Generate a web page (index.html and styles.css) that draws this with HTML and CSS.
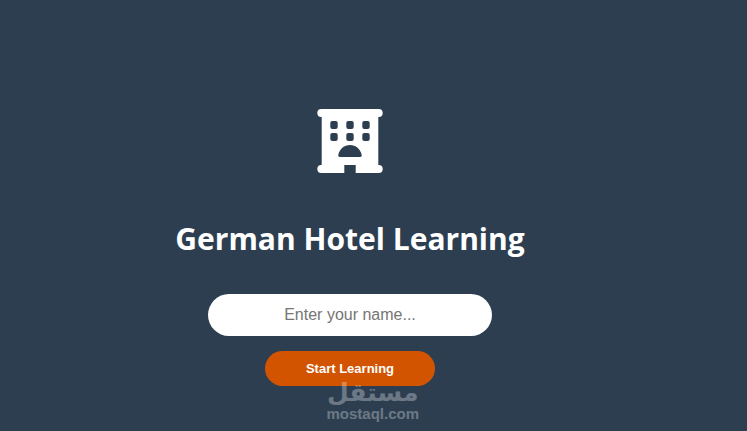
FILE: index.html
```
<!DOCTYPE html>
<html lang="en">
<head>
  <meta charset="UTF-8">
  <meta name="viewport" content="width=device-width, initial-scale=1.0">
  <title>German Hotel Learning</title>
  <link rel="stylesheet" href="styles.css">
</head>
<body>
  <main class="welcome">
    <svg class="hotel-icon" viewBox="0 0 66 64" aria-hidden="true">
      <path fill="#fff" fill-rule="evenodd" d="M4.3 0H61.7a4 4 0 0 1 0 8h-.4V56h.4a4 4 0 0 1 0 8H38.7V56H27.3v8H4.3a4 4 0 0 1 0-8h.4V8h-.4a4 4 0 0 1 0-8z
        M15.3 12h3.4a2 2 0 0 1 2 2v4a2 2 0 0 1-2 2h-3.4a2 2 0 0 1-2-2v-4a2 2 0 0 1 2-2z
        M31.3 12h3.4a2 2 0 0 1 2 2v4a2 2 0 0 1-2 2h-3.4a2 2 0 0 1-2-2v-4a2 2 0 0 1 2-2z
        M47.3 12h3.4a2 2 0 0 1 2 2v4a2 2 0 0 1-2 2h-3.4a2 2 0 0 1-2-2v-4a2 2 0 0 1 2-2z
        M15.3 24h3.4a2 2 0 0 1 2 2v4a2 2 0 0 1-2 2h-3.4a2 2 0 0 1-2-2v-4a2 2 0 0 1 2-2z
        M31.3 24h3.4a2 2 0 0 1 2 2v4a2 2 0 0 1-2 2h-3.4a2 2 0 0 1-2-2v-4a2 2 0 0 1 2-2z
        M47.3 24h3.4a2 2 0 0 1 2 2v4a2 2 0 0 1-2 2h-3.4a2 2 0 0 1-2-2v-4a2 2 0 0 1 2-2z
        M21.3 46C22.5 40 27.2 36 33 36s10.500 4 11.700 10c.2 1.200-.5 2-1.700 2H23c-1.200 0-1.900-.8-1.700-2z"/>
    </svg>
    <h1>German Hotel Learning</h1>
    <form class="start-form">
      <input type="text" id="name" placeholder="Enter your name..." aria-label="Your name">
      <div class="start">
        <button type="submit">Start Learning</button>
        <div class="watermark">
          <span class="watermark-name" lang="ar" dir="rtl">مستقل</span>
          <span class="watermark-site">mostaql.com</span>
        </div>
      </div>
    </form>
  </main>
</body>
</html>
```
FILE: styles.css
```
* {
  box-sizing: border-box;
}

body {
  margin: 0;
  background-color: #2c3e50;
  color: #fff;
  font-family: "Segoe UI", "Open Sans", sans-serif;
}

.welcome {
  display: flex;
  flex-direction: column;
  align-items: center;
  padding: 109px 47px 40px 0;
  text-align: center;
}

.hotel-icon {
  width: 66px;
  height: 64px;
}

h1 {
  margin: 44px 0 33px;
  font-size: 30px;
  line-height: 44px;
  font-weight: 700;
}

.start-form {
  display: flex;
  flex-direction: column;
  align-items: center;
  gap: 15px;
}

input {
  width: 284px;
  padding: 12px;
  border: none;
  border-radius: 25px;
  background-color: #fff;
  font-family: Arial, "Liberation Sans", sans-serif;
  font-size: 16px;
  line-height: 18px;
  text-align: center;
}

input::placeholder {
  color: #757575;
}

.start {
  position: relative;
}

button {
  display: block;
  width: 170px;
  padding: 10px;
  border: none;
  border-radius: 25px;
  background-color: #d35400;
  color: #fff;
  font-family: Arial, "Liberation Sans", sans-serif;
  font-size: 13px;
  line-height: 15px;
  font-weight: bold;
  cursor: pointer;
}

/* faded site mark over the lower edge of the button */
.watermark {
  position: absolute;
  top: 29px;
  right: 16px;
  display: flex;
  flex-direction: column;
  align-items: center;
  color: #fff;
  opacity: 0.3;
  pointer-events: none;
}

.watermark-name {
  font-family: "DejaVu Sans", sans-serif;
  font-size: 25px;
  line-height: 26px;
  font-weight: bold;
}

.watermark-site {
  font-family: Arial, "Liberation Sans", sans-serif;
  font-size: 15px;
  line-height: 16px;
  font-weight: bold;
}
```
